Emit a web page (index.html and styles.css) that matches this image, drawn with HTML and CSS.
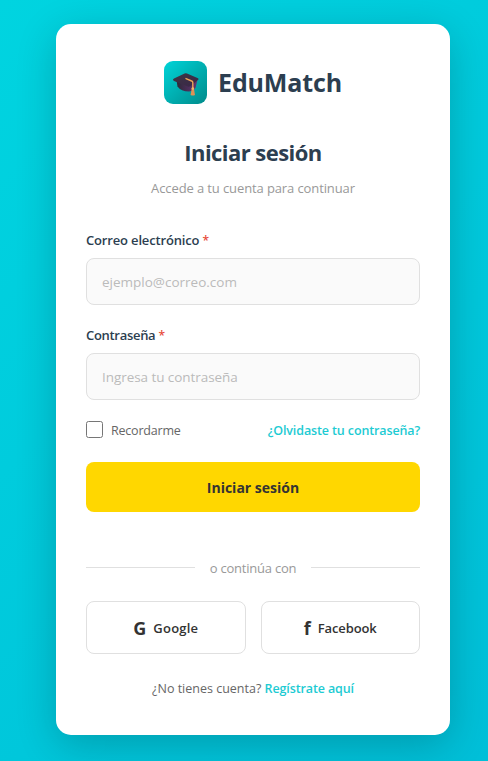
FILE: index.html
```html
<!DOCTYPE html>
<html lang="es">
<head>
<meta charset="utf-8">
<title>EduMatch</title>
<link rel="stylesheet" href="styles.css">
</head>
<body>
<main class="card">
  <div class="brand">
    <div class="logo">
      <svg width="28" height="28" viewBox="0 0 28 28">
        <defs>
          <linearGradient id="cap" x1="0" y1="0" x2="1" y2="1"><stop offset="0" stop-color="#3d3543"/><stop offset="1" stop-color="#3a2748"/></linearGradient>
          <linearGradient id="base" x1="0" y1="0" x2="1" y2="0"><stop offset="0" stop-color="#2d2936"/><stop offset="1" stop-color="#633375"/></linearGradient>
        </defs>
        <path d="M4.5 11 L5.5 17.4 Q9 22.4 17 22.4 Q22 22 23.6 18.4 L25.4 11 Z" fill="url(#base)"/>
        <path d="M1 11 Q0.8 10.2 2 9.6 L12.6 4.6 Q13.8 4.1 15 4.5 L26 9.3 Q27.2 9.9 26.2 10.8 L18.4 17.2 Q17.2 18 15.8 17.4 L2 12 Z" fill="url(#cap)"/>
        <path d="M14 9.6 L19.6 12 Q20.8 12.4 20.8 13.5 L20.8 19.4" fill="none" stroke="#eda458" stroke-width="1.4" stroke-linecap="round"/>
        <path d="M19.7 19.6 h2.2 l1.1 6.4 q-2.1 1.2 -4.4 0 z" fill="#df9256"/>
        <circle cx="20.8" cy="19.6" r="1.3" fill="#f6b66d"/>
      </svg>
    </div>
    <span class="name">EduMatch</span>
  </div>
  <h1 class="title">Iniciar sesión</h1>
  <p class="subtitle">Accede a tu cuenta para continuar</p>
  <form class="form">
    <label class="label" for="email">Correo electrónico <span class="req">*</span></label>
    <input class="input" id="email" type="email" placeholder="ejemplo@correo.com">
    <label class="label label-pass" for="pass">Contraseña <span class="req">*</span></label>
    <input class="input input-pass" id="pass" type="password" placeholder="Ingresa tu contraseña">
    <div class="options">
      <label class="remember"><input class="check" type="checkbox"><span>Recordarme</span></label>
      <a class="link forgot">¿Olvidaste tu contraseña?</a>
    </div>
    <button class="submit" type="button">Iniciar sesión</button>
  </form>
  <div class="divider"><span>o continúa con</span></div>
  <div class="social">
    <button class="social-btn" type="button"><b>G</b><span class="google">Google</span></button>
    <button class="social-btn" type="button"><b>f</b><span class="facebook">Facebook</span></button>
  </div>
  <p class="signup">¿No tienes cuenta? <a class="link register">Regístrate aquí</a></p>
</main>
</body>
</html>
```
FILE: styles.css
```css
* { box-sizing: border-box; margin: 0; }
body {
  min-height: 761px;
  padding: 24px 38px 26px 56px;
  background: linear-gradient(135deg, #00d4e0 0%, #00bfd8 100%);
  font-family: "Open Sans", "Noto Sans", sans-serif;
  color: #2c3e50;
  overflow: hidden;
}
.card {
  height: 711px;
  padding: 37px 30px 0;
  background: #fff;
  border-radius: 15px;
  box-shadow: 0 10px 40px rgba(0, 0, 0, 0.2);
}
.brand { display: flex; justify-content: center; align-items: center; gap: 11px; height: 43px; }
.logo {
  display: grid;
  place-items: center;
  width: 43px;
  height: 43px;
  border-radius: 9px;
  background: linear-gradient(135deg, #00d4d8, #008b8b);
}
.name { font-size: 25px; font-weight: 700; line-height: 43px; letter-spacing: -0.15px; }
.title { height: 32px; margin-top: 32px; font-size: 22px; font-weight: 700; line-height: 32px; letter-spacing: -0.55px; text-align: center; }
.subtitle { height: 20px; margin-top: 10px; font-size: 13px; line-height: 20px; letter-spacing: -0.11px; text-align: center; color: #999; }
.form { margin-top: 32px; }
.label { display: block; height: 20px; margin-bottom: 8px; font-size: 13px; font-weight: 600; line-height: 20px; letter-spacing: -0.16px; }
.label-pass { letter-spacing: -0.3px; }
.req { color: #e74c3c; font-size: 12px; }
.input {
  display: block;
  width: 100%;
  height: 47px;
  margin-bottom: 20px;
  padding: 0 15px;
  border: 1px solid #e0e0e0;
  border-radius: 8px;
  background: #fafafa;
  font: 13.5px "Open Sans", "Noto Sans", sans-serif;
}
.input-pass { letter-spacing: -0.06px; }
.input::placeholder { color: #bbb; }
.options { display: flex; justify-content: space-between; align-items: center; height: 20px; font-size: 12.5px; }
.remember { display: flex; align-items: center; gap: 8px; color: #666; letter-spacing: -0.2px; }
.check { appearance: none; width: 17px; height: 17px; margin-bottom: 1px; border: 1px solid #767676; border-radius: 2.5px; background: #fff; }
.link { color: #1dcbd3; font-weight: 600; letter-spacing: -0.12px; }
.submit {
  display: block;
  width: 100%;
  height: 50px;
  margin-top: 22px;
  border: 0;
  border-radius: 8px;
  background: #ffd700;
  color: #333;
  font: 700 14px "Open Sans", "Noto Sans", sans-serif;
}
.divider { display: flex; align-items: center; gap: 15px; height: 20px; margin-top: 46px; font-size: 13px; letter-spacing: -0.21px; color: #999; }
.divider::before, .divider::after { content: ""; flex: 1; height: 1px; margin-bottom: 2px; background: #e0e0e0; }
.social { display: grid; grid-template-columns: 1fr 1fr; gap: 15px; margin-top: 23px; }
.social-btn {
  display: flex;
  justify-content: center;
  align-items: center;
  gap: 7px;
  height: 53px;
  padding: 0;
  border: 1px solid #e0e0e0;
  border-radius: 8px;
  background: #fff;
  color: #333;
  font: 600 13px "Open Sans", "Noto Sans", sans-serif;
}
.social-btn b { font-size: 18px; font-weight: 700; }
.google { letter-spacing: 0.2px; }
.facebook { letter-spacing: -0.12px; }
.signup { margin-top: 25px; height: 20px; font-size: 12.5px; line-height: 20px; text-align: center; color: #666; }
```
